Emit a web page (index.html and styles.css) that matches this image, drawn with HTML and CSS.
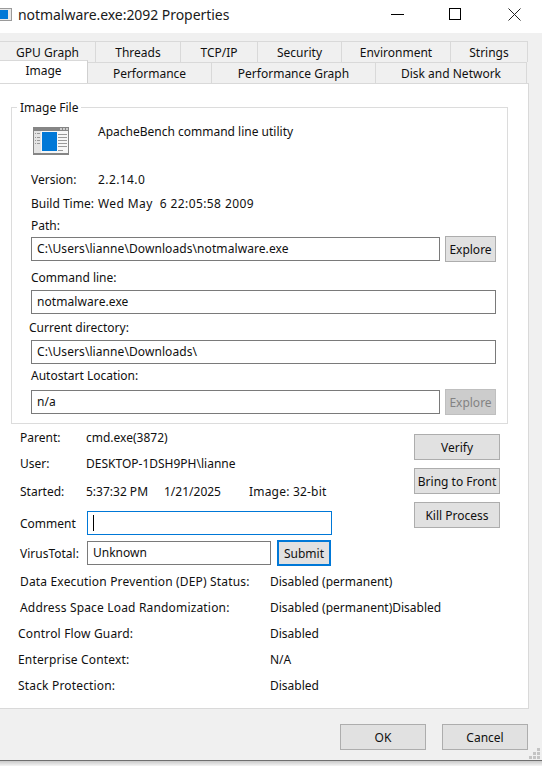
FILE: index.html
```html
<!DOCTYPE html>
<html lang="en">
<head>
<meta charset="utf-8">
<title>notmalware.exe:2092 Properties</title>
<link rel="stylesheet" href="styles.css">
</head>
<body>
<div class="dialog">
  <header class="titlebar">
    <svg class="app-icon" width="12" height="13" viewBox="0 0 12 13"><rect x="0" y="0" width="12" height="13" fill="#9a9a9a"/><rect x="0" y="1" width="11" height="11" fill="#e8e8e8"/><rect x="0" y="2" width="8" height="9" fill="#0078d7"/></svg>
    <span class="title">notmalware.exe:2092 Properties</span>
    <svg class="win-btn min" width="13" height="13" viewBox="0 0 13 13"><path d="M0 6.5H13" stroke="#000" fill="none"/></svg>
    <svg class="win-btn max" width="13" height="13" viewBox="0 0 13 13"><rect x=".5" y=".5" width="11" height="11" stroke="#000" fill="none"/></svg>
    <svg class="win-btn close" width="13" height="13" viewBox="0 0 13 13"><path d="M.5.5L12.5 12.5M12.5.5L.5 12.5" stroke="#222" fill="none"/></svg>
  </header>
  <main class="body">
    <nav class="tabs">
      <div class="tab-row row-back">
        <span class="tab w95">GPU Graph</span>
        <span class="tab w85">Threads</span>
        <span class="tab w77">TCP/IP</span>
        <span class="tab w84">Security</span>
        <span class="tab w109">Environment</span>
        <span class="tab w77">Strings</span>
      </div>
      <div class="tab-row row-front">
        <span class="tab tab-active">Image</span>
        <span class="tab w124">Performance</span>
        <span class="tab w164">Performance Graph</span>
        <span class="tab w151">Disk and Network</span>
      </div>
    </nav>
    <section class="panel">
      <div class="group">
        <div class="legend">Image File</div>
        <div class="file-head">
          <svg class="file-icon" width="36" height="28" viewBox="0 0 36 28">
            <rect x="0" y="0" width="36" height="28" fill="#858585"/>
            <rect x="1" y="4" width="34" height="22" fill="#f6f6f6"/>
            <rect x="1" y="4" width="7" height="22" fill="#e4e4e4"/>
            <rect x="9" y="5" width="15" height="19" fill="#0078d7"/>
            <path d="M25 7.500h9M25 10.500h9M25 13.500h9M25 16.500h9M25 19.500h9M25 23.500h5" stroke="#999" fill="none"/>
            <path d="M2 6.500h1M4 6.500h3M2 10.500h1M4 10.500h3M2 13.500h1M4 13.500h3M2 16.500h1M4 16.500h3" stroke="#999" fill="none"/>
            <rect x="27" y="1" width="2" height="2" fill="#ccc"/><rect x="30" y="1" width="2" height="2" fill="#ccc"/><rect x="33" y="1" width="2" height="2" fill="#ccc"/>
          </svg>
          <span class="file-desc">ApacheBench command line utility</span>
        </div>
        <div class="kv kv-version"><span class="kv-label">Version:</span><span class="num">2.2.14.0</span></div>
        <div class="kv kv-build"><span class="kv-label">Build Time:</span><span class="num">Wed May&nbsp; 6 22:05:58 2009</span></div>
        <div class="field-label fl-path">Path:</div>
        <div class="field-row fr-path">
          <div class="input input-short">C:\Users\lianne\Downloads\notmalware.exe</div>
          <button class="btn btn-explore">Explore</button>
        </div>
        <div class="field-label fl-cmd">Command line:</div>
        <div class="input input-full">notmalware.exe</div>
        <div class="field-label fl-dir">Current directory:</div>
        <div class="input input-full">C:\Users\lianne\Downloads\</div>
        <div class="field-label fl-auto">Autostart Location:</div>
        <div class="field-row fr-auto">
          <div class="input input-short">n/a</div>
          <button class="btn btn-explore btn-disabled">Explore</button>
        </div>
      </div>
      <div class="lower">
        <div class="lower-left">
          <div class="info i-parent"><span class="info-label">Parent:</span><span>cmd.exe(3872)</span></div>
          <div class="info i-user"><span class="info-label">User:</span><span>DESKTOP-1DSH9PH\lianne</span></div>
          <div class="info i-started"><span class="info-label">Started:</span><span class="started">5:37:32 PM</span><span class="date">1/21/2025</span><span class="bitness">Image: 32-bit</span></div>
          <div class="form-row fr-comment">
            <label class="form-label">Comment</label>
            <div class="input input-comment"><span class="caret"></span></div>
          </div>
          <div class="form-row fr-vt">
            <label class="form-label">VirusTotal:</label>
            <div class="input input-vt">Unknown</div>
            <button class="btn btn-submit">Submit</button>
          </div>
        </div>
        <div class="actions">
          <button class="btn btn-action">Verify</button>
          <button class="btn btn-action">Bring to Front</button>
          <button class="btn btn-action">Kill Process</button>
        </div>
      </div>
      <div class="status">
        <div class="st"><span class="st-label">Data Execution Prevention (DEP) Status:</span><span>Disabled (permanent)</span></div>
        <div class="st"><span class="st-label">Address Space Load Randomization:</span><span>Disabled (permanent)Disabled</span></div>
        <div class="st st-out"><span class="st-label">Control Flow Guard:</span><span>Disabled</span></div>
        <div class="st st-out"><span class="st-label">Enterprise Context:</span><span>N/A</span></div>
        <div class="st st-out"><span class="st-label">Stack Protection:</span><span>Disabled</span></div>
      </div>
    </section>
    <footer class="footer">
      <button class="btn btn-foot">OK</button>
      <button class="btn btn-foot">Cancel</button>
      <svg class="grip" width="12" height="12" viewBox="0 0 12 12" fill="#c4c4c4"><rect x="8" y="0" width="3" height="3"/><rect x="4" y="4" width="3" height="3"/><rect x="8" y="4" width="3" height="3"/><rect x="0" y="8" width="3" height="3"/><rect x="4" y="8" width="3" height="3"/><rect x="8" y="8" width="3" height="3"/></svg>
    </footer>
  </main>
  <div class="shadow"></div>
</div>
</body>
</html>
```
FILE: styles.css
```css
* { box-sizing: border-box; }
html, body { margin: 0; padding: 0; }
body {
  width: 542px;
  height: 766px;
  overflow: hidden;
  background: #fff;
  font-family: "Noto Sans", "DejaVu Sans", sans-serif;
  font-size: 12px;
  line-height: 16px;
  color: #101010;
}
.dialog { width: 542px; height: 766px; display: flex; flex-direction: column; }

.titlebar { height: 33px; padding-bottom: 4px; display: flex; align-items: center; background: #fff; flex: none; }
.app-icon { flex: none; margin-right: 6px; }
.title { font-size: 14px; letter-spacing: -0.05px; color: #1a1a1a; width: 373px; white-space: nowrap; }
.win-btn { flex: none; }
.min { margin-right: 45px; }
.max { margin-right: 46px; }

.body { flex: 1; background: #f0f0f0; display: flex; flex-direction: column; }
.tabs { padding-top: 8px; height: 50px; flex: none; }
.tab-row { display: flex; height: 21px; }
.tab {
  display: flex; align-items: center; justify-content: center;
  background: #f0f0f0;
  border-top: 1px solid #d9d9d9;
  border-right: 1px solid #d9d9d9;
  padding-top: 2px;
  white-space: nowrap;
  flex: none;
}
.row-back .tab { height: 21px; }
.row-front .tab { height: 21px; }
.w95 { width: 96px; } .w85 { width: 85px; } .w77 { width: 77px; } .w84 { width: 84px; } .w109 { width: 109px; }
.w124 { width: 124px; } .w164 { width: 164px; } .w151 { width: 151px; }
.tab-active {
  width: 88px; height: 23px !important; margin-top: -2px; padding-top: 0; padding-bottom: 2px;
  background: #fff; border-right: 1px solid #d0d0d0; position: relative; z-index: 1;
}
.row-front .tab:not(.tab-active) { align-self: flex-start; }

.panel {
  width: 529px; height: 626px; flex: none;
  background: #fff;
  border-top: 1px solid #d9d9d9;
  border-right: 1px solid #d9d9d9;
  border-bottom: 1px solid #d9d9d9;
}

.group {
  position: relative;
  margin: 23px 0 0 11px; width: 497px; height: 317px;
  border: 1px solid #dcdcdc;
}
.legend { position: absolute; left: 5px; top: -8px; padding: 0 3px; background: #fff; }
.file-head { display: flex; height: 55px; margin-left: 21px; }
.file-icon { flex: none; margin-top: 19px; }
.file-desc { margin-left: 29px; margin-top: 16px; }
.kv { display: flex; margin-left: 19px; height: 16px; white-space: nowrap; }
.kv-label { width: 67px; flex: none; }
.kv-version { margin-top: 9px; }
.kv-build { margin-top: 8px; }
.num { letter-spacing: 0.4px; }
.field-label { height: 16px; margin-left: 19px; }
.fl-path { margin-top: 6px; }
.fl-cmd { margin-top: 8px; }
.fl-dir { margin-top: 6px; margin-left: 17px; }
.fl-auto { margin-top: 4px; }
.field-row { display: flex; gap: 5px; margin-left: 19px; }
.fr-path { margin-top: 3px; }
.fr-auto { margin-top: 6px; }
.input {
  height: 24px; border: 1px solid #7a7a7a; background: #fff;
  display: flex; align-items: center; padding-left: 5px; white-space: nowrap;
}
.input-short { width: 409px; letter-spacing: 0.08px; }
.input-full { width: 465px; margin-left: 19px; margin-top: 4px; letter-spacing: 0.08px; }
.btn {
  font: inherit; color: #101010; background: #e1e1e1; border: 1px solid #adadad;
  padding: 2px 0 0; height: 26px; display: block; white-space: nowrap;
}
.btn-explore { width: 51px; margin-top: -1px; }
.btn-disabled { background: #cccccc; border-color: #bfbfbf; color: #838383; }

.lower { display: flex; height: 145px; }
.lower-left { width: 403px; flex: none; padding-left: 20px; }
.info { display: flex; height: 16px; white-space: nowrap; }
.info-label { width: 66px; flex: none; }
.i-parent { margin-top: 6px; }
.i-user { margin-top: 10px; }
.i-started { margin-top: 12px; }
.started { width: 78px; flex: none; }
.date { width: 85px; flex: none; }
.bitness { letter-spacing: 0.2px; }
.form-row { display: flex; align-items: center; }
.form-label { width: 67px; flex: none; padding-top: 2px; }
.fr-comment { margin-top: 11px; }
.fr-vt { margin-top: 5px; }
.input-comment { width: 245px; border-color: #0078d7; }
.caret { width: 1px; height: 16px; background: #000; }
.input-vt { width: 184px; }
.btn-submit { width: 54px; margin-left: 6px; border: 2px solid #0078d7; }
.actions { display: flex; flex-direction: column; gap: 8px; padding-top: 10px; margin-left: 11px; }
.btn-action { width: 86px; }

.status { padding-left: 20px; }
.st { display: flex; height: 26px; align-items: center; white-space: nowrap; }
.st-label { width: 250px; flex: none; letter-spacing: 0.17px; }
.st-out { margin-left: -2px; }
.st-out .st-label { width: 252px; }

.footer { flex: 1; display: flex; position: relative; padding: 15px 0 0 340px; gap: 16px; border-bottom: 1px solid #6f6f6f; }
.btn-foot { width: 86px; }
.grip { position: absolute; right: 1px; bottom: 0; }
.shadow { height: 5px; flex: none; background: linear-gradient(#c9c9c9, #f4f4f4); }
```
